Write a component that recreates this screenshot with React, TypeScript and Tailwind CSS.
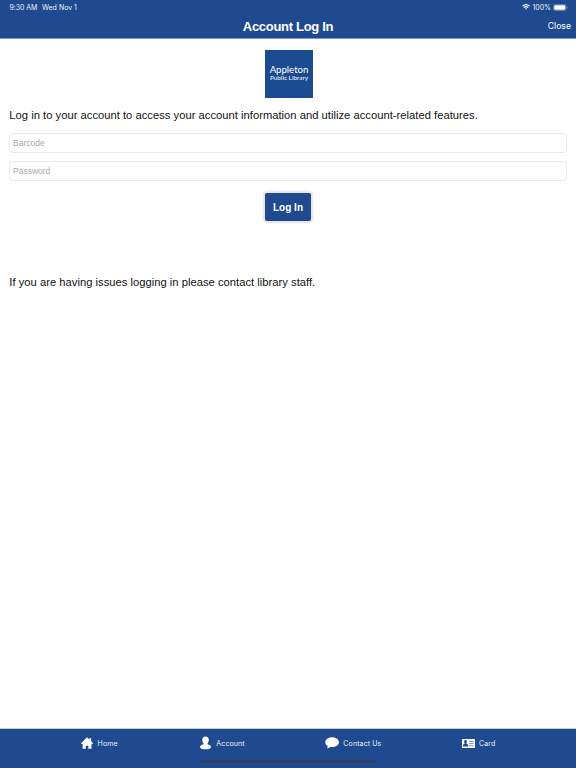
import type { ReactNode } from "react";

function HomeIcon() {
  return (
    <svg viewBox="0 0 12 12" className="h-3 w-3 shrink-0" fill="#fff">
      <path d="M6 .3 8.300 2.500V1.300h1.900v3L12 6.200l-.5.7h-1v4.800H7.300V8.700H4.800v3H1.600V6.900h-1L0 6.200Z" />
    </svg>
  );
}

function AccountIcon() {
  return (
    <svg viewBox="0 0 11 14" className="h-3.5 w-[11px] shrink-0" fill="#fff">
      <path d="M5.500.5c2.100 0 3.300 1.400 3.300 3.200 0 1.500-.5 2.900-1.300 3.700v.8l2.200.9c.9.400 1.200 1.300 1.200 2.400 0 1.200-2.500 1.800-5.400 1.800S.1 12.700.1 11.500c0-1.100.3-2 1.200-2.400l2.200-.9v-.8C2.700 6.600 2.200 5.200 2.200 3.700 2.200 1.900 3.400.5 5.500.5Z" />
    </svg>
  );
}

function ContactIcon() {
  return (
    <svg viewBox="0 0 14 12" className="h-3 w-3.5 shrink-0" fill="#fff">
      <path d="M7.100.3c3.800 0 6.800 2.200 6.800 4.900s-3 4.900-6.800 4.900c-.7 0-1.300-.1-1.900-.2-.9.900-2 1.400-3.300 1.500.6-.7.900-1.500.9-2.300C1.200 8.200.3 6.800.3 5.200.3 2.500 3.300.3 7.100.3Z" />
    </svg>
  );
}

function CardIcon() {
  return (
    <svg viewBox="0 0 13 9" className="h-[9px] w-[13px] shrink-0">
      <rect width="13" height="9" rx="0.500" fill="#fff" />
      <path d="M3.500 1c.9 0 1.400.6 1.400 1.500 0 .7-.2 1.200-.5 1.600v.7l1.400.6c.3.200.4.500.4 1v1.200H.8V6.400c0-.5.1-.8.4-1l1.400-.6v-.7c-.3-.4-.5-.9-.5-1.600C2.100 1.600 2.600 1 3.500 1Z" fill="#1f4a90" />
      <path d="M7.100 2.500h4.700M7.100 4.600h4.700M7.100 6.700h4.700" stroke="#1f4a90" strokeWidth="0.600" />
    </svg>
  );
}

function StatusBar() {
  return (
    <div className="flex h-[14px] items-center justify-between pl-[9.500px] pr-[8px] text-[7px] leading-none text-[#eef1f8]">
      <div className="flex gap-[6px] pt-px">
        <span className="w-[26.500px] whitespace-nowrap tracking-[-0.080px]">9:30 AM</span>
        <span className="whitespace-nowrap">Wed Nov 1</span>
      </div>
      <div className="flex items-center">
        <svg viewBox="0 0 8 6" className="mr-[2px] h-[6px] w-2" fill="none" stroke="#fff" strokeWidth="1.100">
          <path d="M.5 2.200Q4-.9 7.500 2.200M1.800 3.700Q4 1.700 6.200 3.700" />
          <path d="m2.900 4.600 1.100 1.200 1.100-1.200Q4 3.800 2.900 4.600Z" fill="#fff" stroke="none" />
        </svg>
        <span className="pt-px">100%</span>
        <svg viewBox="0 0 15 7" className="ml-[2px] h-[7px] w-[15px]">
          <rect x="0.400" y="0.400" width="12.700" height="6.200" rx="1.900" fill="none" stroke="#8ba3c9" strokeWidth="0.700" />
          <rect x="1.200" y="1.200" width="11.100" height="4.600" rx="1.200" fill="#fff" />
          <path d="M13.800 2.600v1.900q.8-.3.800-.95t-.8-.95Z" fill="#8ba3c9" />
        </svg>
      </div>
    </div>
  );
}

function Tab({ icon, className, children }: { icon: ReactNode; className: string; children: ReactNode }) {
  return (
    <a href="#" className={`flex h-7 items-center text-[7px] leading-none whitespace-nowrap tracking-[0.120px] text-[#edf0f7] ${className}`}>
      {icon}
      <span className="pt-px">{children}</span>
    </a>
  );
}

const inputClass =
  "block h-5 w-full rounded-[4px] border border-[#ebebeb] bg-white px-[3px] text-[8.500px] outline-none placeholder:text-[#a9a9a9]";

export default function App() {
  return (
    <div className="flex h-[768px] w-[576px] flex-col bg-white font-['Liberation_Sans',Arial,sans-serif] text-[#111]">
      <header className="h-[39px] shrink-0 border-b border-[#7f9ac3] bg-[#1f4a90] font-['Inter',sans-serif] text-white">
        <StatusBar />
        <div className="grid h-6 grid-cols-[1fr_auto_1fr] items-center pr-[5px]">
          <h1 className="col-start-2 pl-[5px] font-['Liberation_Sans',Arial,sans-serif] text-[13px] leading-none font-bold tracking-[-0.300px]">
            Account Log In
          </h1>
          <button type="button" className="justify-self-end pt-px text-[8.700px] leading-none">
            Close
          </button>
        </div>
      </header>

      <main className="flex-1 px-[9px]">
        <div className="mx-auto mt-[11px] flex h-12 w-12 translate-x-[1px] flex-col items-center justify-center bg-[#1b4b90] font-['Lato',sans-serif] text-white">
          <span className="text-[9.600px] leading-[8px]">Appleton</span>
          <span className="text-[6.400px] leading-[8px] whitespace-nowrap">Public Library</span>
        </div>
        <p className="mt-[9px] pl-[0.300px] text-[11.200px] leading-4 whitespace-nowrap tracking-[0.022px]">
          Log in to your account to access your account information and utilize account-related features.
        </p>
        <form className="mt-[10px]" onSubmit={(e) => e.preventDefault()}>
          <input className={inputClass} placeholder="Barcode" aria-label="Barcode" />
          <input className={`${inputClass} mt-2`} type="password" placeholder="Password" aria-label="Password" />
          <button
            type="submit"
            className="mx-auto mt-3 block h-[28px] w-[46px] rounded-[2px] bg-[#1f4a90] pt-px text-[10px] leading-none font-bold text-white shadow-[0_0_2px_2px_#e4e4e4]"
          >
            Log In
          </button>
        </form>
        <p className="mt-[53px] pl-[0.300px] text-[11.200px] leading-4 whitespace-nowrap tracking-[0.022px]">
          If you are having issues logging in please contact library staff.
        </p>
      </main>

      <nav className="flex h-10 shrink-0 flex-col border-t border-[#c5cddb] bg-[#1f4a90] font-['Inter',sans-serif] text-white">
        <div className="flex justify-evenly">
          <Tab icon={<HomeIcon />} className="gap-[5px] pr-[2px]">Home</Tab>
          <Tab icon={<AccountIcon />} className="gap-[5px]">Account</Tab>
          <Tab icon={<ContactIcon />} className="gap-1">Contact Us</Tab>
          <Tab icon={<CardIcon />} className="gap-1">Card</Tab>
        </div>
        <div className="mx-auto mt-[3px] h-[3px] w-[176px] rounded-full bg-[#2f405f]" />
      </nav>
    </div>
  );
}
